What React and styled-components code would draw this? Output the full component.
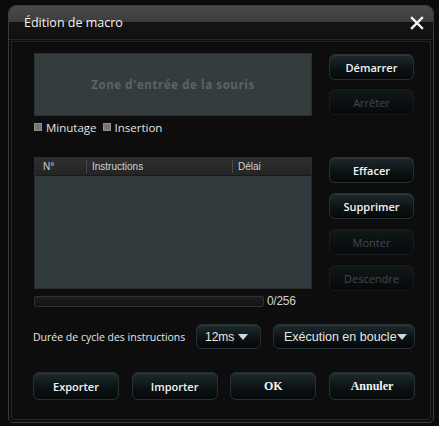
import React from 'react'
import styled, { createGlobalStyle } from 'styled-components'

const GlobalStyle = createGlobalStyle`
    html, body {
        margin: 0;
        padding: 0;
        background: #0b0b0b;
    }
    * { box-sizing: border-box; }
`

const Page = styled.div`
    width: 439px;
    height: 426px;
    padding: 5px 0 0 8px;
    font-family: "Open Sans", "Noto Sans", sans-serif;
`

const Dialog = styled.div`
    width: 426px;
    height: 418px;
    border: 1px solid #3a3a3a;
    border-radius: 8px 8px 5px 5px;
    background: #0d0d0d;
    display: flex;
    flex-direction: column;
    overflow: hidden;
`

const TitleBar = styled.div`
    height: 34px;
    flex-shrink: 0;
    display: flex;
    align-items: center;
    justify-content: space-between;
    padding: 0 6px 0 15px;
    background: linear-gradient(#4a4a4a 0%, #3c3c3c 50%, #141414 50%, #101010 100%);
    border-bottom: 1px solid #262626;
`

const Title = styled.span`
    color: #f2f2f2;
    font-size: 12.5px;
    padding-bottom: 1px;
`

const Close = styled.div`
    width: 20px;
    height: 20px;
    display: flex;
    align-items: center;
    justify-content: center;
`

const Panel = styled.div`
    flex: 1;
    margin: 1px 2px 2px 2px;
    border: 1px solid #262626;
    border-radius: 0 0 4px 4px;
    padding: 11px 15px 0 22px;
    display: flex;
    flex-direction: column;
`

const Row = styled.div`
    display: flex;
    gap: 17px;
    margin-top: ${p => p.$top || 0}px;
`

const LeftCol = styled.div`
    width: 278px;
    display: flex;
    flex-direction: column;
`

const RightCol = styled.div`
    width: 85px;
    display: flex;
    flex-direction: column;
    gap: ${p => p.$gap || 10}px;
    padding-top: ${p => p.$top || 0}px;
`

const MouseZone = styled.div`
    height: 63px;
    background: #353c3e;
    border: 1px solid #2a3032;
    display: flex;
    align-items: center;
    justify-content: center;
    color: #5d6466;
    font-weight: 700;
    font-size: 11.5px;
    letter-spacing: 0.6px;
`

const CheckRow = styled.div`
    display: flex;
    align-items: center;
    gap: 6px;
    margin-top: 4px;
    height: 14px;
`

const Check = styled.label`
    display: flex;
    align-items: center;
    gap: 4px;
    color: #e2e2e2;
    font-size: 11.5px;
`

const Box = styled.span`
    width: 8px;
    height: 8px;
    background: #767676;
    border: 1px solid #8e8e8e;
`

const Button = styled.button`
    height: ${p => p.$h || 26}px;
    width: ${p => p.$w || 85}px;
    border-radius: 6px;
    border: 1px solid ${p => (p.disabled ? '#161d20' : '#263034')};
    background: ${p => (p.disabled
        ? 'linear-gradient(#111719, #07090a)'
        : 'linear-gradient(#1f2a2e, #0b1113 60%, #060909)')};
    box-shadow: inset 0 1px 0 ${p => (p.disabled ? '#151c1e' : '#2c383c')};
    color: ${p => (p.disabled ? '#414a4d' : '#f4f4f4')};
    font-family: ${p => (p.$serif ? '"Liberation Serif", serif' : '"Open Sans", "Noto Sans", sans-serif')};
    font-weight: ${p => (p.disabled ? 400 : p.$serif ? 700 : 600)};
    font-size: ${p => (p.$serif ? 12 : 11)}px;
    padding: 0;
    cursor: default;
`

const List = styled.div`
    height: 132px;
    display: flex;
    flex-direction: column;
    border: 1px solid #2a2a2a;
`

const ListHead = styled.div`
    height: 18px;
    display: flex;
    background: linear-gradient(#2f2f2f, #242424);
    border-bottom: 1px solid #1a1a1a;
    font-family: "Liberation Sans", Arial, sans-serif;
    font-size: 10px;
    color: #d2d2d2;
`

const HeadCell = styled.div`
    width: ${p => p.$w ? `${p.$w}px` : 'auto'};
    flex: ${p => (p.$w ? 'none' : 1)};
    display: flex;
    align-items: center;
    padding-left: ${p => p.$pad || 5}px;
    border-right: ${p => (p.$last ? 'none' : '1px solid #4a4a4a')};
    margin: 2px 0;
`

const ListBody = styled.div`
    flex: 1;
    background: #313a3c;
`

const ProgressRow = styled.div`
    display: flex;
    align-items: center;
    gap: 3px;
    margin-top: 6px;
    height: 12px;
`

const Bar = styled.div`
    width: 230px;
    height: 11px;
    border: 1px solid #303030;
    border-radius: 2px;
    background: linear-gradient(#1e1e1e, #141414);
`

const Count = styled.span`
    color: #d0d0d0;
    font-family: "Liberation Sans", Arial, sans-serif;
    font-size: 12px;
    letter-spacing: -0.3px;
`

const CycleRow = styled.div`
    display: flex;
    align-items: center;
    margin-top: 17px;
    margin-left: -1px;
`

const Label = styled.span`
    color: #e6e6e6;
    font-size: 10.5px;
    width: 163px;
    white-space: nowrap;
`

const Select = styled.div`
    width: ${p => p.$w}px;
    height: 25px;
    flex-shrink: 0;
    margin-left: ${p => p.$ml || 0}px;
    border-radius: 6px;
    border: 1px solid #263034;
    background: linear-gradient(#1f2a2e, #0b1113 60%, #060909);
    box-shadow: inset 0 1px 0 #2c383c;
    display: flex;
    align-items: center;
    padding-left: ${p => p.$pad || 8}px;
    gap: ${p => p.$gap ?? 4}px;
    color: #e8e8e8;
    font-family: "Liberation Sans", Arial, sans-serif;
    font-size: ${p => p.$fs || 12}px;
    white-space: nowrap;
    overflow: hidden;
`

const Caret = styled.span`
    width: 0;
    height: 0;
    flex-shrink: 0;
    border-left: 5px solid transparent;
    border-right: 5px solid transparent;
    border-top: 6px solid #c8d8e0;
`

const Footer = styled.div`
    display: flex;
    justify-content: space-between;
    margin-top: 23px;
    margin-left: -1px;
`

export default function App() {
    return (
        <Page>
            <GlobalStyle />
            <Dialog>
                <TitleBar>
                    <Title>Édition de macro</Title>
                    <Close>
                        <svg width="14" height="14" viewBox="0 0 14 14">
                            <path d="M2 2 L12 12 M12 2 L2 12" stroke="#f4f4f4" strokeWidth="2.4" strokeLinecap="square" />
                        </svg>
                    </Close>
                </TitleBar>
                <Panel>
                    <Row>
                        <LeftCol>
                            <MouseZone>Zone d'entrée de la souris</MouseZone>
                            <CheckRow>
                                <Check><Box />Minutage</Check>
                                <Check><Box />Insertion</Check>
                            </CheckRow>
                        </LeftCol>
                        <RightCol $gap={9} $top={1}>
                            <Button>Démarrer</Button>
                            <Button disabled>Arrêter</Button>
                        </RightCol>
                    </Row>
                    <Row $top={23}>
                        <LeftCol>
                            <List>
                                <ListHead>
                                    <HeadCell $w={52} $pad={8}>N°</HeadCell>
                                    <HeadCell $w={146}>Instructions</HeadCell>
                                    <HeadCell $last>Délai</HeadCell>
                                </ListHead>
                                <ListBody />
                            </List>
                            <ProgressRow>
                                <Bar />
                                <Count>0/256</Count>
                            </ProgressRow>
                        </LeftCol>
                        <RightCol $gap={10}>
                            <Button>Effacer</Button>
                            <Button>Supprimer</Button>
                            <Button disabled>Monter</Button>
                            <Button disabled>Descendre</Button>
                        </RightCol>
                    </Row>
                    <CycleRow>
                        <Label>Durée de cycle des instructions</Label>
                        <Select $w={65}>12ms<Caret /></Select>
                        <Select $w={142} $ml={12} $fs={12.5} $pad={10} $gap={0}>Exécution en boucle<Caret /></Select>
                    </CycleRow>
                    <Footer>
                        <Button $h={28} $w={86}>Exporter</Button>
                        <Button $h={28} $w={86}>Importer</Button>
                        <Button $h={28} $w={86} $serif>OK</Button>
                        <Button $h={28} $w={86} $serif>Annuler</Button>
                    </Footer>
                </Panel>
            </Dialog>
        </Page>
    )
}
